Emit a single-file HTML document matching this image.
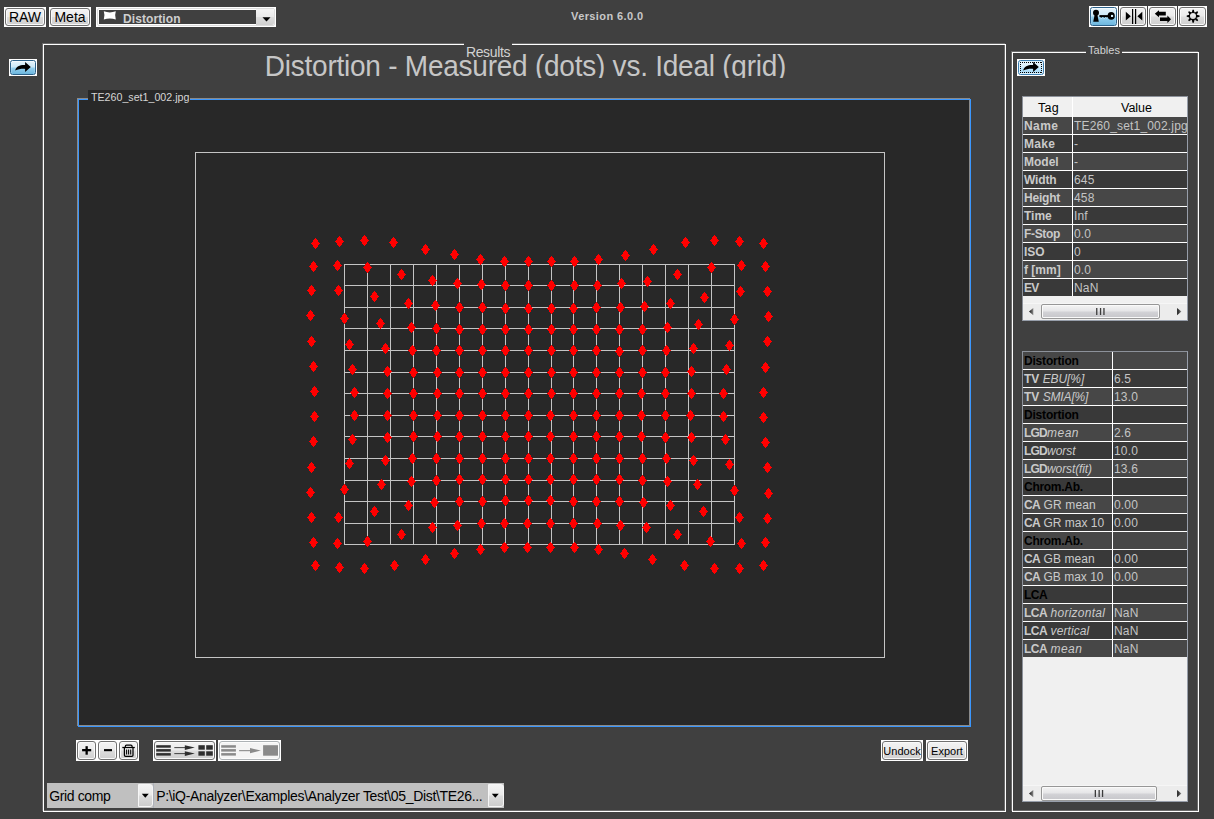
<!DOCTYPE html>
<html lang="en">
<head>
<meta charset="utf-8">
<title>iQ-Analyzer - Distortion</title>
<style>
html,body{margin:0;padding:0;}
body{width:1214px;height:819px;overflow:hidden;background:#404040;position:relative;
 font-family:"Liberation Sans",Arial,sans-serif;font-size:12px;color:#d0d0d0;}
.abs{position:absolute;}
/* win7 style buttons */
.btn{position:absolute;background:#fff;box-sizing:border-box;}
.btn .f{position:absolute;left:1px;top:1px;right:1px;bottom:1px;box-sizing:border-box;border:1px solid #707070;border-radius:3px;
 background:linear-gradient(#f3f3f3 0%,#ebebeb 48%,#dddddd 52%,#cfcfcf 100%);box-shadow:inset 0 0 0 1px #fafafa;}
.btn.blue .f{border-radius:2.5px;border-color:#2c628b;background:linear-gradient(#e6f4fc 0%,#cbe8f7 46%,#93cfee 54%,#6db7df 100%);box-shadow:inset 0 1px 0 0 rgba(255,255,255,.55),inset 1px 0 0 0 rgba(255,255,255,.18),inset -1px 0 0 0 rgba(255,255,255,.18);}
.btn.hot .f{border-radius:2.5px;border-color:#3c7fb1;background:linear-gradient(#eaf6fd 0%,#d9f0fc 48%,#bee6fd 52%,#a7d9f5 100%);box-shadow:inset 0 0 0 1px #e0f3fc;}
.btn.dis .f{border-color:#adb2b5;background:#f4f4f4;box-shadow:inset 0 0 0 1px #fcfcfc;}
.btn .t{position:absolute;left:0;right:0;text-align:center;color:#000;white-space:nowrap;}
.btn svg{position:absolute;left:0;top:0;}
/* panels */
.panel{position:absolute;box-sizing:border-box;border:1px solid #fff;}
.panel.sh{border-color:#6a6a6a;}
.ptitle{position:absolute;background:#404040;color:#d2d2d2;font-size:13px;white-space:nowrap;}
/* tables */
.tbl{position:absolute;box-sizing:border-box;background:#f0f0f0;overflow:hidden;border:1px solid #8c919a;border-right-color:#979eaa;border-bottom-color:#979eaa;}
.row{position:absolute;left:0;width:164px;height:17px;border-bottom:1px solid #fff;white-space:nowrap;overflow:hidden;}
.row.a{background:#474747;}
.row.b{background:#393939;}
.row .k{position:absolute;left:0;top:0;height:17px;line-height:19px;padding-left:1px;box-sizing:border-box;border-right:1px solid #fff;font-weight:bold;color:#cacaca;overflow:hidden;}
.row .k i{font-weight:normal;}
.row .k.h{color:#000;}
.row .v{position:absolute;top:0;height:17px;line-height:19px;padding-left:1px;color:#c4c4c4;letter-spacing:0.17px;}
.sb{position:absolute;left:0;width:164px;height:17px;background:#ececec;box-shadow:inset 0 1px 0 0 #f6f6f6;}
.sb .th{position:absolute;top:1px;height:15px;box-sizing:border-box;border:1px solid #979797;border-radius:2px;
 background:linear-gradient(#f4f4f4 0%,#e6e6e8 45%,#d2d2d6 55%,#c6c6ca 100%);box-shadow:inset 0 0 0 1px #fafafa;}
.sb svg{position:absolute;left:0;top:0;}
/* combos */
.combo{position:absolute;background:#c0c0c0;box-sizing:border-box;color:#000;font-size:14px;letter-spacing:-0.38px;white-space:nowrap;overflow:hidden;}
.combo .ar{position:absolute;right:0;top:1px;bottom:1px;width:15px;box-sizing:border-box;border:1px solid #f6f6f6;border-radius:0 3px 3px 0;
 background:linear-gradient(#f4f4f4 0%,#e9e9e9 48%,#dcdcdc 52%,#cdcdcd 100%);}
.plot{position:absolute;left:0;top:0;}
</style>
</head>
<body>

<!-- ===== top bar ===== -->
<div class="btn" style="left:4px;top:7px;width:42px;height:20px;"><div class="f"></div><div class="t" style="top:2px;font-size:14px;line-height:17px;">RAW</div></div>
<div class="btn" style="left:49px;top:7px;width:42px;height:20px;"><div class="f"></div><div class="t" style="top:2px;font-size:14px;line-height:17px;">Meta</div></div>

<!-- module dropdown -->
<div class="abs" style="left:96px;top:7px;width:180px;height:20px;background:#fff;"></div>
<div class="abs" style="left:97px;top:8px;width:178px;height:18px;box-sizing:border-box;border:1px solid #dcdcdc;border-radius:2px;background:#fff;"></div>
<div class="abs" style="left:99px;top:10px;width:157px;height:14px;background:#404040;"></div>
<svg class="abs" style="left:103px;top:11px;" width="14" height="10" viewBox="0 0 14 10"><path d="M0.8 0.3 Q6.8 2.6 12.8 0.3 Q11.4 4.4 12.8 8.6 Q6.8 6.3 0.8 8.6 Q2.2 4.4 0.8 0.3Z" fill="#fff"/></svg>
<div class="abs" style="left:123px;top:11px;height:14px;line-height:16px;font-size:12px;font-weight:bold;color:#cfcfcf;letter-spacing:0.1px;">Distortion</div>
<div class="abs" style="left:256px;top:9px;width:18px;height:16px;border-radius:0 2px 2px 0;background:linear-gradient(#f4f4f4 0%,#eaeaea 48%,#dddddd 52%,#d0d0d0 100%);"></div>
<svg class="abs" style="left:262px;top:17px;" width="9" height="5" viewBox="0 0 9 5"><path d="M0.5 0.3h8L4.5 4.6z" fill="#000"/></svg>

<div class="abs" style="left:571px;top:10px;font-size:11px;font-weight:bold;line-height:13px;color:#c8c8c8;letter-spacing:0.4px;white-space:nowrap;">Version 6.0.0</div>

<!-- top-right icon buttons -->
<div class="btn blue" style="left:1089px;top:6px;width:29px;height:21px;"><div class="f"></div>
<svg width="29" height="21" viewBox="0 0 29 21"><g fill="#000"><circle cx="7" cy="6.8" r="3"/><path d="M5.7 8.4h2.6l1.5 7.4H4.2z"/><ellipse cx="22.2" cy="9.9" rx="3.6" ry="3.8"/><rect x="10.4" y="9.1" width="9" height="1.9"/><path d="M11.2 10.8h2l-1 1.3zM14.2 10.8h2l-1 1.3zM16.8 10.8h1.8l-.9 1z"/></g><rect x="22" y="8.9" width="2.1" height="2.1" fill="#d4f1ff"/><g fill="#fff" opacity=".85"><rect x="11.7" y="12.2" width=".9" height=".8"/><rect x="14.7" y="12.2" width=".9" height=".8"/><rect x="17" y="11.6" width=".9" height=".8"/></g></svg></div>
<div class="btn" style="left:1119px;top:6px;width:28px;height:21px;"><div class="f"></div>
<svg width="28" height="21" viewBox="0 0 28 21"><g fill="#000"><path d="M6.8 5.8L11.8 10.2L6.8 14.6z"/><rect x="13" y="3" width="1.2" height="15"/><rect x="16" y="3" width="1.2" height="15"/><path d="M23.3 5.8L18.4 10.2L23.3 14.6z"/></g></svg></div>
<div class="btn" style="left:1148px;top:6px;width:29px;height:21px;"><div class="f"></div>
<svg width="29" height="21" viewBox="0 0 29 21"><g fill="#000"><path d="M6.8 7.7L11 4.2V5.8H17.8V9.4H11V11.2z"/><path d="M23 13.3L19.4 9.6V11.5H12V15.1H19.4V16.9z"/></g></svg></div>
<div class="btn" style="left:1178px;top:6px;width:29px;height:21px;"><div class="f"></div>
<svg width="29" height="21" viewBox="0 0 29 21"><g transform="translate(15.15 10.2)"><circle cx="-0.15" cy="-0.1" r="3.6" fill="none" stroke="#000" stroke-width="1.2"/><g fill="#000"><path transform="rotate(0)" d="M-1.35 -3.8H1.35L0.65 -6.45H-0.65z"/><path transform="rotate(45)" d="M-1.35 -3.8H1.35L0.65 -6.45H-0.65z"/><path transform="rotate(90)" d="M-1.35 -3.8H1.35L0.65 -6.45H-0.65z"/><path transform="rotate(135)" d="M-1.35 -3.8H1.35L0.65 -6.45H-0.65z"/><path transform="rotate(180)" d="M-1.35 -3.8H1.35L0.65 -6.45H-0.65z"/><path transform="rotate(225)" d="M-1.35 -3.8H1.35L0.65 -6.45H-0.65z"/><path transform="rotate(270)" d="M-1.35 -3.8H1.35L0.65 -6.45H-0.65z"/><path transform="rotate(315)" d="M-1.35 -3.8H1.35L0.65 -6.45H-0.65z"/></g></g></svg></div>

<!-- left arrow button -->
<div class="btn blue" style="left:9px;top:59px;width:28px;height:17px;"><div class="f"></div>
<svg width="28" height="17" viewBox="0 0 28 17"><path d="M6.1 11.5C7.2 7.7 10.8 5.9 16.1 6.1V3L21.8 7.9L16.1 13.1V9.9C12.6 9.7 9.2 10.2 6.1 11.5z" fill="#000"/></svg></div>

<!-- ===== Results panel ===== -->
<div class="panel sh" style="left:42px;top:43px;width:963px;height:768px;"></div><div class="panel" style="left:43px;top:44px;width:963px;height:768px;"></div>
<div class="abs" style="left:44px;top:45px;width:961px;height:33px;overflow:hidden;">
 <div class="abs" style="left:1px;top:6px;width:961px;text-align:center;font-size:28px;line-height:32px;color:#c6c6c6;letter-spacing:-0.24px;white-space:nowrap;transform-origin:50% 25px;transform:scaleY(1.045);">Distortion - Measured (dots) vs. Ideal (grid)</div>
</div>
<div class="ptitle" style="left:464px;top:43px;width:48px;height:15px;line-height:18px;text-align:center;font-size:14px;letter-spacing:-0.35px;overflow:hidden;">Results</div>

<!-- plot panel (etched border gray + blue) -->
<div class="abs" style="left:77px;top:98px;width:893px;height:628px;box-sizing:border-box;border:1px solid #8a8a8a;"></div>
<div class="abs" style="left:78px;top:99px;width:893px;height:628px;box-sizing:border-box;border:1px solid #3a96fd;"></div>
<div class="abs" style="left:79px;top:100px;width:890px;height:625px;background:#282828;overflow:hidden;"><svg class="plot" width="890" height="625" viewBox="0 0 890 625" shape-rendering="crispEdges"><g fill="#c4c4c4"><rect x="116" y="52" width="690" height="1"/><rect x="116" y="557" width="690" height="1"/><rect x="116" y="52" width="1" height="506"/><rect x="805" y="52" width="1" height="506"/><rect x="265" y="164" width="1" height="281"/><rect x="288" y="164" width="1" height="281"/><rect x="311" y="164" width="1" height="281"/><rect x="334" y="164" width="1" height="281"/><rect x="357" y="164" width="1" height="281"/><rect x="380" y="164" width="1" height="281"/><rect x="403" y="164" width="1" height="281"/><rect x="426" y="164" width="1" height="281"/><rect x="449" y="164" width="1" height="281"/><rect x="472" y="164" width="1" height="281"/><rect x="494" y="164" width="1" height="281"/><rect x="517" y="164" width="1" height="281"/><rect x="540" y="164" width="1" height="281"/><rect x="563" y="164" width="1" height="281"/><rect x="586" y="164" width="1" height="281"/><rect x="609" y="164" width="1" height="281"/><rect x="632" y="164" width="1" height="281"/><rect x="655" y="164" width="1" height="281"/><rect x="265" y="164" width="391" height="1"/><rect x="265" y="185" width="391" height="1"/><rect x="265" y="207" width="391" height="1"/><rect x="265" y="228" width="391" height="1"/><rect x="265" y="250" width="391" height="1"/><rect x="265" y="272" width="391" height="1"/><rect x="265" y="293" width="391" height="1"/><rect x="265" y="315" width="391" height="1"/><rect x="265" y="336" width="391" height="1"/><rect x="265" y="358" width="391" height="1"/><rect x="265" y="380" width="391" height="1"/><rect x="265" y="401" width="391" height="1"/><rect x="265" y="423" width="391" height="1"/><rect x="265" y="444" width="391" height="1"/></g><g fill="#ff0000"><polygon points="285.5,135.0 290.0,140.5 285.5,146.0 281.0,140.5"/><polygon points="635.5,135.0 640.0,140.5 635.5,146.0 631.0,140.5"/><polygon points="260.5,136.0 265.0,141.5 260.5,147.0 256.0,141.5"/><polygon points="660.5,136.0 665.0,141.5 660.5,147.0 656.0,141.5"/><polygon points="314.5,137.0 319.0,142.5 314.5,148.0 310.0,142.5"/><polygon points="606.5,137.0 611.0,142.5 606.5,148.0 602.0,142.5"/><polygon points="236.5,138.0 241.0,143.5 236.5,149.0 232.0,143.5"/><polygon points="684.5,138.0 689.0,143.5 684.5,149.0 680.0,143.5"/><polygon points="346.5,144.0 351.0,149.5 346.5,155.0 342.0,149.5"/><polygon points="574.5,144.0 579.0,149.5 574.5,155.0 570.0,149.5"/><polygon points="375.5,149.0 380.0,154.5 375.5,160.0 371.0,154.5"/><polygon points="546.5,150.0 551.0,155.5 546.5,161.0 542.0,155.5"/><polygon points="401.5,154.0 406.0,159.5 401.5,165.0 397.0,159.5"/><polygon points="519.5,154.0 524.0,159.5 519.5,165.0 515.0,159.5"/><polygon points="425.5,156.0 430.0,161.5 425.5,167.0 421.0,161.5"/><polygon points="449.5,156.0 454.0,161.5 449.5,167.0 445.0,161.5"/><polygon points="472.5,156.0 477.0,161.5 472.5,167.0 468.0,161.5"/><polygon points="495.5,156.0 500.0,161.5 495.5,167.0 491.0,161.5"/><polygon points="258.5,160.0 263.0,165.5 258.5,171.0 254.0,165.5"/><polygon points="662.5,160.0 667.0,165.5 662.5,171.0 658.0,165.5"/><polygon points="234.5,161.0 239.0,166.5 234.5,172.0 230.0,166.5"/><polygon points="686.5,161.0 691.0,166.5 686.5,172.0 682.0,166.5"/><polygon points="288.5,162.0 293.0,167.5 288.5,173.0 284.0,167.5"/><polygon points="632.5,162.0 637.0,167.5 632.5,173.0 628.0,167.5"/><polygon points="322.5,169.0 327.0,174.5 322.5,180.0 318.0,174.5"/><polygon points="598.5,169.0 603.0,174.5 598.5,180.0 594.0,174.5"/><polygon points="353.5,175.0 358.0,180.5 353.5,186.0 349.0,180.5"/><polygon points="568.5,176.0 573.0,181.5 568.5,187.0 564.0,181.5"/><polygon points="378.5,178.0 383.0,183.5 378.5,189.0 374.0,183.5"/><polygon points="542.5,178.0 547.0,183.5 542.5,189.0 538.0,183.5"/><polygon points="402.5,179.0 407.0,184.5 402.5,190.0 398.0,184.5"/><polygon points="426.5,180.0 431.0,185.5 426.5,191.0 422.0,185.5"/><polygon points="449.5,180.0 454.0,185.5 449.5,191.0 445.0,185.5"/><polygon points="472.5,180.0 477.0,185.5 472.5,191.0 468.0,185.5"/><polygon points="495.5,180.0 500.0,185.5 495.5,191.0 491.0,185.5"/><polygon points="518.5,180.0 523.0,185.5 518.5,191.0 514.0,185.5"/><polygon points="232.5,185.0 237.0,190.5 232.5,196.0 228.0,190.5"/><polygon points="259.5,185.0 264.0,190.5 259.5,196.0 255.0,190.5"/><polygon points="661.5,186.0 666.0,191.5 661.5,197.0 657.0,191.5"/><polygon points="688.5,186.0 693.0,191.5 688.5,197.0 684.0,191.5"/><polygon points="295.5,191.0 300.0,196.5 295.5,202.0 291.0,196.5"/><polygon points="625.5,192.0 630.0,197.5 625.5,203.0 621.0,197.5"/><polygon points="329.5,198.0 334.0,203.5 329.5,209.0 325.0,203.5"/><polygon points="591.5,198.0 596.0,203.5 591.5,209.0 587.0,203.5"/><polygon points="356.5,200.0 361.0,205.5 356.5,211.0 352.0,205.5"/><polygon points="565.5,201.0 570.0,206.5 565.5,212.0 561.0,206.5"/><polygon points="380.5,202.0 385.0,207.5 380.5,213.0 376.0,207.5"/><polygon points="403.5,202.0 408.0,207.5 403.5,213.0 399.0,207.5"/><polygon points="517.5,202.0 522.0,207.5 517.5,213.0 513.0,207.5"/><polygon points="541.5,202.0 546.0,207.5 541.5,213.0 537.0,207.5"/><polygon points="426.5,203.0 431.0,208.5 426.5,214.0 422.0,208.5"/><polygon points="449.5,203.0 454.0,208.5 449.5,214.0 445.0,208.5"/><polygon points="472.5,203.0 477.0,208.5 472.5,214.0 468.0,208.5"/><polygon points="494.5,203.0 499.0,208.5 494.5,214.0 490.0,208.5"/><polygon points="231.5,210.0 236.0,215.5 231.5,221.0 227.0,215.5"/><polygon points="689.5,211.0 694.0,216.5 689.5,222.0 685.0,216.5"/><polygon points="265.5,213.0 270.0,218.5 265.5,224.0 261.0,218.5"/><polygon points="655.5,214.0 660.0,219.5 655.5,225.0 651.0,219.5"/><polygon points="301.5,218.0 306.0,223.5 301.5,229.0 297.0,223.5"/><polygon points="619.5,219.0 624.0,224.5 619.5,230.0 615.0,224.5"/><polygon points="332.5,222.0 337.0,227.5 332.5,233.0 328.0,227.5"/><polygon points="588.5,222.0 593.0,227.5 588.5,233.0 584.0,227.5"/><polygon points="357.5,223.0 362.0,228.5 357.5,234.0 353.0,228.5"/><polygon points="380.5,224.0 385.0,229.5 380.5,235.0 376.0,229.5"/><polygon points="403.5,224.0 408.0,229.5 403.5,235.0 399.0,229.5"/><polygon points="426.5,224.0 431.0,229.5 426.5,235.0 422.0,229.5"/><polygon points="449.5,224.0 454.0,229.5 449.5,235.0 445.0,229.5"/><polygon points="472.5,224.0 477.0,229.5 472.5,235.0 468.0,229.5"/><polygon points="494.5,224.0 499.0,229.5 494.5,235.0 490.0,229.5"/><polygon points="517.5,224.0 522.0,229.5 517.5,235.0 513.0,229.5"/><polygon points="540.5,224.0 545.0,229.5 540.5,235.0 536.0,229.5"/><polygon points="563.5,224.0 568.0,229.5 563.5,235.0 559.0,229.5"/><polygon points="232.5,236.0 237.0,241.5 232.5,247.0 228.0,241.5"/><polygon points="688.5,236.0 693.0,241.5 688.5,247.0 684.0,241.5"/><polygon points="270.5,239.0 275.0,244.5 270.5,250.0 266.0,244.5"/><polygon points="650.5,240.0 655.0,245.5 650.5,251.0 646.0,245.5"/><polygon points="306.5,243.0 311.0,248.5 306.5,254.0 302.0,248.5"/><polygon points="614.5,243.0 619.0,248.5 614.5,254.0 610.0,248.5"/><polygon points="333.5,245.0 338.0,250.5 333.5,256.0 329.0,250.5"/><polygon points="357.5,245.0 362.0,250.5 357.5,256.0 353.0,250.5"/><polygon points="380.5,245.0 385.0,250.5 380.5,256.0 376.0,250.5"/><polygon points="403.5,245.0 408.0,250.5 403.5,256.0 399.0,250.5"/><polygon points="426.5,245.0 431.0,250.5 426.5,256.0 422.0,250.5"/><polygon points="449.5,245.0 454.0,250.5 449.5,256.0 445.0,250.5"/><polygon points="472.5,245.0 477.0,250.5 472.5,256.0 468.0,250.5"/><polygon points="494.5,245.0 499.0,250.5 494.5,256.0 490.0,250.5"/><polygon points="517.5,245.0 522.0,250.5 517.5,256.0 513.0,250.5"/><polygon points="563.5,245.0 568.0,250.5 563.5,256.0 559.0,250.5"/><polygon points="587.5,245.0 592.0,250.5 587.5,256.0 583.0,250.5"/><polygon points="540.5,246.0 545.0,251.5 540.5,257.0 536.0,251.5"/><polygon points="234.5,261.0 239.0,266.5 234.5,272.0 230.0,266.5"/><polygon points="686.5,262.0 691.0,267.5 686.5,273.0 682.0,267.5"/><polygon points="273.5,264.0 278.0,269.5 273.5,275.0 269.0,269.5"/><polygon points="647.5,264.0 652.0,269.5 647.5,275.0 643.0,269.5"/><polygon points="308.5,266.0 313.0,271.5 308.5,277.0 304.0,271.5"/><polygon points="612.5,266.0 617.0,271.5 612.5,277.0 608.0,271.5"/><polygon points="334.5,267.0 339.0,272.5 334.5,278.0 330.0,272.5"/><polygon points="358.5,267.0 363.0,272.5 358.5,278.0 354.0,272.5"/><polygon points="380.5,267.0 385.0,272.5 380.5,278.0 376.0,272.5"/><polygon points="403.5,267.0 408.0,272.5 403.5,278.0 399.0,272.5"/><polygon points="426.5,267.0 431.0,272.5 426.5,278.0 422.0,272.5"/><polygon points="449.5,267.0 454.0,272.5 449.5,278.0 445.0,272.5"/><polygon points="472.5,267.0 477.0,272.5 472.5,278.0 468.0,272.5"/><polygon points="494.5,267.0 499.0,272.5 494.5,278.0 490.0,272.5"/><polygon points="517.5,267.0 522.0,272.5 517.5,278.0 513.0,272.5"/><polygon points="540.5,267.0 545.0,272.5 540.5,278.0 536.0,272.5"/><polygon points="563.5,267.0 568.0,272.5 563.5,278.0 559.0,272.5"/><polygon points="586.5,267.0 591.0,272.5 586.5,278.0 582.0,272.5"/><polygon points="235.5,286.0 240.0,291.5 235.5,297.0 231.0,291.5"/><polygon points="275.5,287.0 280.0,292.5 275.5,298.0 271.0,292.5"/><polygon points="684.5,287.0 689.0,292.5 684.5,298.0 680.0,292.5"/><polygon points="308.5,288.0 313.0,293.5 308.5,299.0 304.0,293.5"/><polygon points="334.5,288.0 339.0,293.5 334.5,299.0 330.0,293.5"/><polygon points="358.5,288.0 363.0,293.5 358.5,299.0 354.0,293.5"/><polygon points="380.5,288.0 385.0,293.5 380.5,299.0 376.0,293.5"/><polygon points="403.5,288.0 408.0,293.5 403.5,299.0 399.0,293.5"/><polygon points="426.5,288.0 431.0,293.5 426.5,299.0 422.0,293.5"/><polygon points="449.5,288.0 454.0,293.5 449.5,299.0 445.0,293.5"/><polygon points="472.5,288.0 477.0,293.5 472.5,299.0 468.0,293.5"/><polygon points="494.5,288.0 499.0,293.5 494.5,299.0 490.0,293.5"/><polygon points="517.5,288.0 522.0,293.5 517.5,299.0 513.0,293.5"/><polygon points="540.5,288.0 545.0,293.5 540.5,299.0 536.0,293.5"/><polygon points="562.5,288.0 567.0,293.5 562.5,299.0 558.0,293.5"/><polygon points="586.5,288.0 591.0,293.5 586.5,299.0 582.0,293.5"/><polygon points="612.5,288.0 617.0,293.5 612.5,299.0 608.0,293.5"/><polygon points="644.5,288.0 649.0,293.5 644.5,299.0 640.0,293.5"/><polygon points="275.5,310.0 280.0,315.5 275.5,321.0 271.0,315.5"/><polygon points="308.5,310.0 313.0,315.5 308.5,321.0 304.0,315.5"/><polygon points="334.5,310.0 339.0,315.5 334.5,321.0 330.0,315.5"/><polygon points="358.5,310.0 363.0,315.5 358.5,321.0 354.0,315.5"/><polygon points="380.5,310.0 385.0,315.5 380.5,321.0 376.0,315.5"/><polygon points="403.5,310.0 408.0,315.5 403.5,321.0 399.0,315.5"/><polygon points="426.5,310.0 431.0,315.5 426.5,321.0 422.0,315.5"/><polygon points="449.5,310.0 454.0,315.5 449.5,321.0 445.0,315.5"/><polygon points="471.5,310.0 476.0,315.5 471.5,321.0 467.0,315.5"/><polygon points="494.5,310.0 499.0,315.5 494.5,321.0 490.0,315.5"/><polygon points="517.5,310.0 522.0,315.5 517.5,321.0 513.0,315.5"/><polygon points="540.5,310.0 545.0,315.5 540.5,321.0 536.0,315.5"/><polygon points="562.5,310.0 567.0,315.5 562.5,321.0 558.0,315.5"/><polygon points="586.5,310.0 591.0,315.5 586.5,321.0 582.0,315.5"/><polygon points="611.5,310.0 616.0,315.5 611.5,321.0 607.0,315.5"/><polygon points="235.5,311.0 240.0,316.5 235.5,322.0 231.0,316.5"/><polygon points="644.5,311.0 649.0,316.5 644.5,322.0 640.0,316.5"/><polygon points="684.5,312.0 689.0,317.5 684.5,323.0 680.0,317.5"/><polygon points="334.5,331.0 339.0,336.5 334.5,342.0 330.0,336.5"/><polygon points="358.5,331.0 363.0,336.5 358.5,342.0 354.0,336.5"/><polygon points="380.5,331.0 385.0,336.5 380.5,342.0 376.0,336.5"/><polygon points="403.5,331.0 408.0,336.5 403.5,342.0 399.0,336.5"/><polygon points="426.5,331.0 431.0,336.5 426.5,342.0 422.0,336.5"/><polygon points="449.5,331.0 454.0,336.5 449.5,342.0 445.0,336.5"/><polygon points="471.5,331.0 476.0,336.5 471.5,342.0 467.0,336.5"/><polygon points="494.5,331.0 499.0,336.5 494.5,342.0 490.0,336.5"/><polygon points="517.5,331.0 522.0,336.5 517.5,342.0 513.0,336.5"/><polygon points="540.5,331.0 545.0,336.5 540.5,342.0 536.0,336.5"/><polygon points="562.5,331.0 567.0,336.5 562.5,342.0 558.0,336.5"/><polygon points="308.5,332.0 313.0,337.5 308.5,343.0 304.0,337.5"/><polygon points="586.5,332.0 591.0,337.5 586.5,343.0 582.0,337.5"/><polygon points="612.5,332.0 617.0,337.5 612.5,343.0 608.0,337.5"/><polygon points="273.5,334.0 278.0,339.5 273.5,345.0 269.0,339.5"/><polygon points="646.5,334.0 651.0,339.5 646.5,345.0 642.0,339.5"/><polygon points="234.5,336.0 239.0,341.5 234.5,347.0 230.0,341.5"/><polygon points="686.5,337.0 691.0,342.5 686.5,348.0 682.0,342.5"/><polygon points="333.5,353.0 338.0,358.5 333.5,364.0 329.0,358.5"/><polygon points="357.5,353.0 362.0,358.5 357.5,364.0 353.0,358.5"/><polygon points="380.5,353.0 385.0,358.5 380.5,364.0 376.0,358.5"/><polygon points="403.5,353.0 408.0,358.5 403.5,364.0 399.0,358.5"/><polygon points="426.5,353.0 431.0,358.5 426.5,364.0 422.0,358.5"/><polygon points="449.5,353.0 454.0,358.5 449.5,364.0 445.0,358.5"/><polygon points="471.5,353.0 476.0,358.5 471.5,364.0 467.0,358.5"/><polygon points="494.5,353.0 499.0,358.5 494.5,364.0 490.0,358.5"/><polygon points="517.5,353.0 522.0,358.5 517.5,364.0 513.0,358.5"/><polygon points="540.5,353.0 545.0,358.5 540.5,364.0 536.0,358.5"/><polygon points="563.5,353.0 568.0,358.5 563.5,364.0 559.0,358.5"/><polygon points="587.5,353.0 592.0,358.5 587.5,364.0 583.0,358.5"/><polygon points="306.5,355.0 311.0,360.5 306.5,366.0 302.0,360.5"/><polygon points="614.5,355.0 619.0,360.5 614.5,366.0 610.0,360.5"/><polygon points="270.5,358.0 275.0,363.5 270.5,369.0 266.0,363.5"/><polygon points="650.5,359.0 655.0,364.5 650.5,370.0 646.0,364.5"/><polygon points="232.5,362.0 237.0,367.5 232.5,373.0 228.0,367.5"/><polygon points="688.5,362.0 693.0,367.5 688.5,373.0 684.0,367.5"/><polygon points="380.5,374.0 385.0,379.5 380.5,385.0 376.0,379.5"/><polygon points="403.5,374.0 408.0,379.5 403.5,385.0 399.0,379.5"/><polygon points="426.5,374.0 431.0,379.5 426.5,385.0 422.0,379.5"/><polygon points="449.5,374.0 454.0,379.5 449.5,385.0 445.0,379.5"/><polygon points="471.5,374.0 476.0,379.5 471.5,385.0 467.0,379.5"/><polygon points="494.5,374.0 499.0,379.5 494.5,385.0 490.0,379.5"/><polygon points="517.5,374.0 522.0,379.5 517.5,385.0 513.0,379.5"/><polygon points="540.5,374.0 545.0,379.5 540.5,385.0 536.0,379.5"/><polygon points="357.5,375.0 362.0,380.5 357.5,386.0 353.0,380.5"/><polygon points="563.5,375.0 568.0,380.5 563.5,386.0 559.0,380.5"/><polygon points="332.5,376.0 337.0,381.5 332.5,387.0 328.0,381.5"/><polygon points="588.5,376.0 593.0,381.5 588.5,387.0 584.0,381.5"/><polygon points="302.5,379.0 307.0,384.5 302.5,390.0 298.0,384.5"/><polygon points="618.5,379.0 623.0,384.5 618.5,390.0 614.0,384.5"/><polygon points="265.5,384.0 270.0,389.5 265.5,395.0 261.0,389.5"/><polygon points="655.5,385.0 660.0,390.5 655.5,396.0 651.0,390.5"/><polygon points="231.5,387.0 236.0,392.5 231.5,398.0 227.0,392.5"/><polygon points="689.5,388.0 694.0,393.5 689.5,399.0 685.0,393.5"/><polygon points="426.5,395.0 431.0,400.5 426.5,406.0 422.0,400.5"/><polygon points="449.5,395.0 454.0,400.5 449.5,406.0 445.0,400.5"/><polygon points="471.5,395.0 476.0,400.5 471.5,406.0 467.0,400.5"/><polygon points="380.5,396.0 385.0,401.5 380.5,407.0 376.0,401.5"/><polygon points="403.5,396.0 408.0,401.5 403.5,407.0 399.0,401.5"/><polygon points="494.5,396.0 499.0,401.5 494.5,407.0 490.0,401.5"/><polygon points="517.5,396.0 522.0,401.5 517.5,407.0 513.0,401.5"/><polygon points="540.5,396.0 545.0,401.5 540.5,407.0 536.0,401.5"/><polygon points="355.5,397.0 360.0,402.5 355.5,408.0 351.0,402.5"/><polygon points="564.5,397.0 569.0,402.5 564.5,408.0 560.0,402.5"/><polygon points="329.5,400.0 334.0,405.5 329.5,411.0 325.0,405.5"/><polygon points="591.5,400.0 596.0,405.5 591.5,411.0 587.0,405.5"/><polygon points="295.5,406.0 300.0,411.5 295.5,417.0 291.0,411.5"/><polygon points="624.5,406.0 629.0,411.5 624.5,417.0 620.0,411.5"/><polygon points="232.5,412.0 237.0,417.5 232.5,423.0 228.0,417.5"/><polygon points="259.5,412.0 264.0,417.5 259.5,423.0 255.0,417.5"/><polygon points="660.5,412.0 665.0,417.5 660.5,423.0 656.0,417.5"/><polygon points="688.5,413.0 693.0,418.5 688.5,424.0 684.0,418.5"/><polygon points="402.5,418.0 407.0,423.5 402.5,429.0 398.0,423.5"/><polygon points="425.5,418.0 430.0,423.5 425.5,429.0 421.0,423.5"/><polygon points="448.5,418.0 453.0,423.5 448.5,429.0 444.0,423.5"/><polygon points="471.5,418.0 476.0,423.5 471.5,429.0 467.0,423.5"/><polygon points="494.5,418.0 499.0,423.5 494.5,429.0 490.0,423.5"/><polygon points="518.5,418.0 523.0,423.5 518.5,429.0 514.0,423.5"/><polygon points="378.5,420.0 383.0,425.5 378.5,431.0 374.0,425.5"/><polygon points="541.5,420.0 546.0,425.5 541.5,431.0 537.0,425.5"/><polygon points="353.5,422.0 358.0,427.5 353.5,433.0 349.0,427.5"/><polygon points="567.5,422.0 572.0,427.5 567.5,433.0 563.0,427.5"/><polygon points="322.5,429.0 327.0,434.5 322.5,440.0 318.0,434.5"/><polygon points="598.5,429.0 603.0,434.5 598.5,440.0 594.0,434.5"/><polygon points="288.5,436.0 293.0,441.5 288.5,447.0 284.0,441.5"/><polygon points="631.5,436.0 636.0,441.5 631.5,447.0 627.0,441.5"/><polygon points="234.5,437.0 239.0,442.5 234.5,448.0 230.0,442.5"/><polygon points="686.5,437.0 691.0,442.5 686.5,448.0 682.0,442.5"/><polygon points="258.5,438.0 263.0,443.5 258.5,449.0 254.0,443.5"/><polygon points="662.5,438.0 667.0,443.5 662.5,449.0 658.0,443.5"/><polygon points="425.5,442.0 430.0,447.5 425.5,453.0 421.0,447.5"/><polygon points="448.5,442.0 453.0,447.5 448.5,453.0 444.0,447.5"/><polygon points="471.5,442.0 476.0,447.5 471.5,453.0 467.0,447.5"/><polygon points="495.5,442.0 500.0,447.5 495.5,453.0 491.0,447.5"/><polygon points="401.5,444.0 406.0,449.5 401.5,455.0 397.0,449.5"/><polygon points="519.5,444.0 524.0,449.5 519.5,455.0 515.0,449.5"/><polygon points="375.5,448.0 380.0,453.5 375.5,459.0 371.0,453.5"/><polygon points="545.5,448.0 550.0,453.5 545.5,459.0 541.0,453.5"/><polygon points="346.5,454.0 351.0,459.5 346.5,465.0 342.0,459.5"/><polygon points="573.5,454.0 578.0,459.5 573.5,465.0 569.0,459.5"/><polygon points="236.5,460.0 241.0,465.5 236.5,471.0 232.0,465.5"/><polygon points="315.5,460.0 320.0,465.5 315.5,471.0 311.0,465.5"/><polygon points="605.5,460.0 610.0,465.5 605.5,471.0 601.0,465.5"/><polygon points="684.5,460.0 689.0,465.5 684.5,471.0 680.0,465.5"/><polygon points="260.5,462.0 265.0,467.5 260.5,473.0 256.0,467.5"/><polygon points="285.5,463.0 290.0,468.5 285.5,474.0 281.0,468.5"/><polygon points="635.5,463.0 640.0,468.5 635.5,474.0 631.0,468.5"/><polygon points="660.5,463.0 665.0,468.5 660.5,474.0 656.0,468.5"/></g></svg></div>
<div class="abs" style="left:88px;top:90px;width:102px;height:13px;background:#282828;color:#d6d6d6;font-size:10.67px;line-height:14px;white-space:nowrap;padding-left:3px;box-sizing:border-box;">TE260_set1_002.jpg</div>

<!-- bottom tool buttons -->
<div class="btn" style="left:76px;top:740px;width:21px;height:21px;"><div class="f"></div>
<svg width="21" height="21" viewBox="0 0 21 21"><g fill="#000"><rect x="6.1" y="9" width="9.1" height="2.3"/><rect x="9.5" y="6.2" width="2.3" height="8.5"/></g></svg></div>
<div class="btn" style="left:97px;top:740px;width:21px;height:21px;"><div class="f"></div>
<svg width="21" height="21" viewBox="0 0 21 21"><rect x="7" y="9.1" width="8" height="2.1" fill="#000"/></svg></div>
<div class="btn" style="left:118px;top:740px;width:21px;height:21px;"><div class="f"></div>
<svg width="21" height="21" viewBox="0 0 21 21"><g fill="none" stroke="#000" stroke-width="1.25"><path d="M4.3 7.5H16.8"/><path d="M7.3 7.3V6.4Q7.3 5.2 8.5 5.2H12.9Q14.1 5.2 14.1 6.4V7.3"/><path d="M6.4 7.5V15.2Q6.4 16.3 7.5 16.3H13.9Q15 16.3 15 15.2V7.5"/><path d="M8.6 9.5V14.5M10.6 9.5V14.5M12.7 9.5V14.5" stroke-width="1.05"/></g></svg></div>

<div class="btn" style="left:153px;top:740px;width:63px;height:21px;"><div class="f"></div>
<svg width="63" height="21" viewBox="0 0 63 21"><g fill="#2e2e2e"><rect x="3.2" y="5.2" width="14.6" height="2.5"/><rect x="3.2" y="9.1" width="14.6" height="2.5"/><rect x="3.2" y="13.1" width="14.6" height="2.5"/>
<rect x="21.3" y="7.2" width="12" height="0.9"/><path d="M31.8 5.3L41.8 7.6L31.8 10z"/><rect x="21.3" y="13.2" width="12" height="0.9"/><path d="M31.8 11.3L41.8 13.6L31.8 16z"/>
<rect x="45.4" y="5.2" width="6.4" height="4.5"/><rect x="53.2" y="5.2" width="6.6" height="4.5"/><rect x="45.4" y="11.3" width="6.4" height="4.4"/><rect x="53.2" y="11.3" width="6.6" height="4.4"/></g></svg></div>
<div class="btn dis" style="left:218px;top:740px;width:63px;height:21px;"><div class="f"></div>
<svg width="63" height="21" viewBox="0 0 63 21"><g fill="#8a8a8a"><rect x="3.2" y="5.2" width="14.7" height="2.5"/><rect x="3.2" y="9.1" width="14.7" height="2.5"/><rect x="3.2" y="13.1" width="14.7" height="2.5"/>
<rect x="21.1" y="10.1" width="12" height="1.1"/><path d="M32 8L42.8 10.6L32 13.2z"/><rect x="45.1" y="5.2" width="14.9" height="10.5"/></g></svg></div>

<div class="btn" style="left:881px;top:740px;width:42px;height:21px;"><div class="f"></div><div class="t" style="top:5px;font-size:11px;line-height:13px;">Undock</div></div>
<div class="btn" style="left:926px;top:740px;width:42px;height:21px;"><div class="f"></div><div class="t" style="top:5px;font-size:11px;line-height:13px;">Export</div></div>

<!-- bottom combos -->
<div class="abs" style="left:153px;top:783px;width:1px;height:25px;background:#aeb2ba;z-index:2;"></div><div class="combo" style="left:47px;top:783px;width:107px;height:25px;"><span class="abs" style="left:2.3px;top:5px;line-height:17px;">Grid comp</span><div class="ar" style="right:1px;"></div>
<svg class="abs" style="left:94px;top:10px;" width="9" height="6" viewBox="0 0 9 6"><path d="M0.8 0.8h7L4.3 4.8z" fill="#000"/></svg></div>
<div class="combo" style="left:154px;top:783px;width:350px;height:25px;"><span class="abs" style="left:2.2px;top:5px;line-height:17px;letter-spacing:-0.33px;">P:\iQ-Analyzer\Examples\Analyzer Test\05_Dist\TE26...</span><div class="ar" style="width:16px;"></div>
<svg class="abs" style="left:337px;top:10px;" width="9" height="6" viewBox="0 0 9 6"><path d="M0.8 0.8h7L4.3 4.8z" fill="#000"/></svg></div>

<!-- ===== Tables panel ===== -->
<div class="panel sh" style="left:1011px;top:51px;width:187px;height:760px;"></div><div class="panel" style="left:1012px;top:52px;width:187px;height:760px;"></div>
<div class="ptitle" style="left:1086px;top:43px;width:36px;height:14px;line-height:14px;text-align:center;font-size:11px;">Tables</div>
<div class="btn hot" style="left:1017px;top:59px;width:28px;height:17px;"><div class="f"></div>
<svg width="28" height="17" viewBox="0 0 28 17"><path d="M6.1 11.5C7.2 7.7 10.8 5.9 16.1 6.1V3L21.8 7.9L16.1 13.1V9.9C12.6 9.7 9.2 10.2 6.1 11.5z" fill="#000"/><g stroke="#000" stroke-width="1" stroke-dasharray="1 1" shape-rendering="crispEdges" fill="none"><path d="M3 3.5H24M3 13.5H24M3.5 3V14M24.5 3V14"/></g></svg></div>

<!-- table 1 -->
<div class="tbl" style="left:1022px;top:96px;width:166px;height:225px;">
 <div class="abs" style="left:0;top:0;width:49px;height:20px;border-right:1px solid #fff;color:#000;text-align:center;line-height:22px;font-size:12.5px;letter-spacing:0.3px;text-indent:2px;">Tag</div>
 <div class="abs" style="left:50px;top:0;width:125px;height:20px;color:#000;text-align:center;line-height:22px;font-size:12.5px;text-indent:2px;">Value</div>
 <div class="row a" style="top:20px;"><div class="k" style="width:50px;letter-spacing:0.4px;">Name</div><div class="v" style="left:50px;">TE260_set1_002.jpg</div></div>
 <div class="row b" style="top:38px;"><div class="k" style="width:50px;letter-spacing:0.33px;">Make</div><div class="v" style="left:50px;">-</div></div>
 <div class="row a" style="top:56px;"><div class="k" style="width:50px;">Model</div><div class="v" style="left:50px;">-</div></div>
 <div class="row b" style="top:74px;"><div class="k" style="width:50px;letter-spacing:-0.15px;">Width</div><div class="v" style="left:50px;">645</div></div>
 <div class="row a" style="top:92px;"><div class="k" style="width:50px;letter-spacing:-0.2px;">Height</div><div class="v" style="left:50px;">458</div></div>
 <div class="row b" style="top:110px;"><div class="k" style="width:50px;">Time</div><div class="v" style="left:50px;">Inf</div></div>
 <div class="row a" style="top:128px;"><div class="k" style="width:50px;letter-spacing:-0.32px;">F-Stop</div><div class="v" style="left:50px;">0.0</div></div>
 <div class="row b" style="top:146px;"><div class="k" style="width:50px;">ISO</div><div class="v" style="left:50px;">0</div></div>
 <div class="row a" style="top:164px;"><div class="k" style="width:50px;">f [mm]</div><div class="v" style="left:50px;">0.0</div></div>
 <div class="row b" style="top:182px;border-bottom-color:#f0f0f0;"><div class="k" style="width:50px;letter-spacing:-0.8px;">EV</div><div class="v" style="left:50px;">NaN</div></div>
 <div class="sb" style="top:206px;"><div class="th" style="left:18px;width:119px;"></div>
 <svg width="164" height="17" viewBox="0 0 164 17"><linearGradient id="ag1" x1="0" y1="0" x2="1" y2="0"><stop offset="0" stop-color="#111"/><stop offset="1" stop-color="#8a8a8a"/></linearGradient><g fill="url(#ag1)"><path d="M6 8.6L10.3 4.9V12.3z"/><path d="M158.4 8.6L154.1 4.9V12.3z"/></g><g fill="#3c3c3c"><rect x="73.1" y="5" width="1.3" height="7"/><rect x="76.9" y="5" width="1.3" height="7"/><rect x="80.3" y="5" width="1.3" height="7"/></g></svg></div>
</div>

<!-- table 2 -->
<div class="tbl" style="left:1022px;top:351px;width:166px;height:451px;">
 <div class="row a" style="top:0px;"><div class="k h" style="width:90px;letter-spacing:-0.19px;">Distortion</div></div>
 <div class="row b" style="top:18px;"><div class="k" style="width:90px;">TV <i style="letter-spacing:-0.09px">EBU[%]</i></div><div class="v" style="left:90px;">6.5</div></div>
 <div class="row a" style="top:36px;"><div class="k" style="width:90px;">TV <i style="letter-spacing:-0.15px">SMIA[%]</i></div><div class="v" style="left:90px;">13.0</div></div>
 <div class="row b" style="top:54px;"><div class="k h" style="width:90px;letter-spacing:-0.19px;">Distortion</div></div>
 <div class="row a" style="top:72px;"><div class="k" style="width:90px;"><span style="letter-spacing:-0.77px">LGD</span><i style="letter-spacing:0.47px">mean</i></div><div class="v" style="left:90px;">2.6</div></div>
 <div class="row b" style="top:90px;"><div class="k" style="width:90px;"><span style="letter-spacing:-0.77px">LGD</span><i>worst</i></div><div class="v" style="left:90px;">10.0</div></div>
 <div class="row a" style="top:108px;"><div class="k" style="width:90px;"><span style="letter-spacing:-0.77px">LGD</span><i style="letter-spacing:-0.11px">worst(fit)</i></div><div class="v" style="left:90px;">13.6</div></div>
 <div class="row b" style="top:126px;"><div class="k h" style="width:90px;letter-spacing:-0.29px;">Chrom.Ab.</div></div>
 <div class="row a" style="top:144px;"><div class="k" style="width:90px;"><span style="letter-spacing:-0.6px">CA</span> <span style="font-weight:normal;letter-spacing:0.15px">GR mean</span></div><div class="v" style="left:90px;">0.00</div></div>
 <div class="row b" style="top:162px;"><div class="k" style="width:90px;"><span style="letter-spacing:-0.6px">CA</span> <span style="font-weight:normal">GR max 10</span></div><div class="v" style="left:90px;">0.00</div></div>
 <div class="row a" style="top:180px;"><div class="k h" style="width:90px;letter-spacing:-0.29px;">Chrom.Ab.</div></div>
 <div class="row b" style="top:198px;"><div class="k" style="width:90px;"><span style="letter-spacing:-0.6px">CA</span> <span style="font-weight:normal;letter-spacing:0.08px">GB mean</span></div><div class="v" style="left:90px;">0.00</div></div>
 <div class="row a" style="top:216px;"><div class="k" style="width:90px;"><span style="letter-spacing:-0.6px">CA</span> <span style="font-weight:normal">GB max 10</span></div><div class="v" style="left:90px;">0.00</div></div>
 <div class="row b" style="top:234px;"><div class="k h" style="width:90px;letter-spacing:-0.47px;">LCA</div></div>
 <div class="row a" style="top:252px;"><div class="k" style="width:90px;"><span style="letter-spacing:-0.47px">LCA</span> <i style="letter-spacing:0.25px">horizontal</i></div><div class="v" style="left:90px;">NaN</div></div>
 <div class="row b" style="top:270px;"><div class="k" style="width:90px;"><span style="letter-spacing:-0.47px">LCA</span> <i style="letter-spacing:0.09px">vertical</i></div><div class="v" style="left:90px;">NaN</div></div>
 <div class="row a" style="top:288px;border-bottom-color:#f0f0f0;"><div class="k" style="width:90px;"><span style="letter-spacing:-0.47px">LCA</span> <i style="letter-spacing:0.4px">mean</i></div><div class="v" style="left:90px;">NaN</div></div>
 <div class="sb" style="top:433px;"><div class="th" style="left:18px;width:116px;"></div>
 <svg width="164" height="17" viewBox="0 0 164 17"><linearGradient id="ag2" x1="0" y1="0" x2="1" y2="0"><stop offset="0" stop-color="#111"/><stop offset="1" stop-color="#8a8a8a"/></linearGradient><g fill="url(#ag2)"><path d="M6 8.6L10.3 4.9V12.3z"/><path d="M158.4 8.6L154.1 4.9V12.3z"/></g><g fill="#3c3c3c"><rect x="71.7" y="5" width="1.3" height="7"/><rect x="75.5" y="5" width="1.3" height="7"/><rect x="78.9" y="5" width="1.3" height="7"/></g></svg></div>
</div>

</body>
</html>
